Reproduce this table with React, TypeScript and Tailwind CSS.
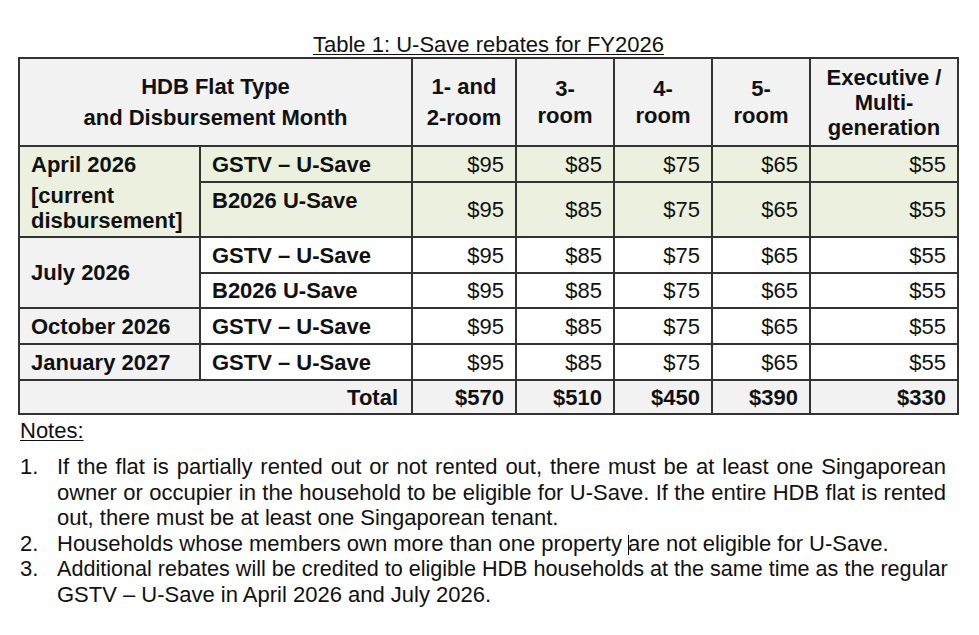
export default function App() {
  const num = "text-right pr-[11px] border-r-2 border-b-2 border-[#333]";
  const cell = "border-r-2 border-b-2 border-[#333]";
  const vals = ["$95", "$85", "$75", "$65", "$55"];
  const Nums = ({ bg }: { bg: string }) => (
    <>
      {vals.map((v) => (
        <td key={v} className={`${num} ${bg}`}>{v}</td>
      ))}
    </>
  );
  const just = "block [text-align-last:justify] text-justify";
  return (
    <div className="w-[979px] h-[635px] bg-white text-[#111] font-['Liberation_Sans',Arial,sans-serif] overflow-hidden">
      <div className="pt-[33px] pl-[18px]">
        <div className="w-[941px] h-[24px] text-center text-[22px] leading-[24px]">
          <span className="underline underline-offset-[2px] decoration-1">Table 1: U-Save rebates for FY2026</span>
        </div>
        <table className="border-separate border-spacing-0 table-fixed w-[941px] border-l-2 border-t-2 border-[#333] text-[22px] leading-[25px]">
          <colgroup>
            <col className="w-[181px]" />
            <col className="w-[212px]" />
            <col className="w-[104px]" />
            <col className="w-[98px]" />
            <col className="w-[98px]" />
            <col className="w-[98px]" />
            <col className="w-[148px]" />
          </colgroup>
          <tbody>
            <tr className="h-[88px] bg-[#f2f2f2] font-bold text-center">
              <td colSpan={2} className={`${cell} leading-[31px]`}>
                HDB Flat Type
                <br />
                and Disbursement Month
              </td>
              <td className={`${cell} leading-[31px]`}>
                1- and
                <br />
                2-room
              </td>
              <td className={`${cell} leading-[27px]`}>
                3-
                <br />
                room
              </td>
              <td className={`${cell} leading-[27px]`}>
                4-
                <br />
                room
              </td>
              <td className={`${cell} leading-[27px]`}>
                5-
                <br />
                room
              </td>
              <td className={`${cell} leading-[25px]`}>
                Executive /
                <br />
                Multi-
                <br />
                generation
              </td>
            </tr>
            <tr className="h-[36px]">
              <td rowSpan={2} className={`${cell} bg-[#ebf1de] font-bold align-top pl-[11px]`}>
                <div className="leading-[36px]">April 2026</div>
                <div className="leading-[25px]">
                  [current
                  <br />
                  disbursement]
                </div>
              </td>
              <td className={`${cell} bg-[#ebf1de] font-bold pl-[11px]`}>GSTV – U-Save</td>
              <Nums bg="bg-[#ebf1de]" />
            </tr>
            <tr className="h-[55px]">
              <td className={`${cell} bg-[#ebf1de] font-bold pl-[11px] align-top leading-[36px]`}>B2026 U-Save</td>
              <Nums bg="bg-[#ebf1de]" />
            </tr>
            <tr className="h-[36px]">
              <td rowSpan={2} className={`${cell} bg-[#f2f2f2] font-bold pl-[11px]`}>July 2026</td>
              <td className={`${cell} bg-white font-bold pl-[11px]`}>GSTV – U-Save</td>
              <Nums bg="bg-white" />
            </tr>
            <tr className="h-[35px]">
              <td className={`${cell} bg-white font-bold pl-[11px]`}>B2026 U-Save</td>
              <Nums bg="bg-white" />
            </tr>
            <tr className="h-[36px]">
              <td className={`${cell} bg-[#f2f2f2] font-bold pl-[11px]`}>October 2026</td>
              <td className={`${cell} bg-white font-bold pl-[11px]`}>GSTV – U-Save</td>
              <Nums bg="bg-white" />
            </tr>
            <tr className="h-[36px]">
              <td className={`${cell} bg-[#f2f2f2] font-bold pl-[11px]`}>January 2027</td>
              <td className={`${cell} bg-white font-bold pl-[11px]`}>GSTV – U-Save</td>
              <Nums bg="bg-white" />
            </tr>
            <tr className="h-[34px] bg-[#f2f2f2] font-bold">
              <td colSpan={2} className={`${cell} text-right pr-[13px]`}>Total</td>
              <td className={num}>$570</td>
              <td className={num}>$510</td>
              <td className={num}>$450</td>
              <td className={num}>$390</td>
              <td className={num}>$330</td>
            </tr>
          </tbody>
        </table>
        <div className="mt-[3px] pl-[2px] text-[22px] leading-[25px]">
          <span className="underline underline-offset-[2px] decoration-1">Notes:</span>
        </div>
        <ol className="mt-[11px] text-[22px] leading-[25.5px] whitespace-nowrap">
          <li className="flex">
            <span className="w-[39px] pl-[2px] shrink-0">1.</span>
            <div className="w-[889px]">
              <span className={just}>
                If the flat is partially rented out or not rented out, there must be at least one Singaporean
              </span>
              <span className={just}>
                owner or occupier in the household to be eligible for U-Save. If the entire HDB flat is rented
              </span>
              <span className="block">out, there must be at least one Singaporean tenant.</span>
            </div>
          </li>
          <li className="flex">
            <span className="w-[39px] pl-[2px] shrink-0">2.</span>
            <div className="w-[889px]">
              Households whose members own more than one property{" "}
              <span className="inline-block w-px h-[20px] bg-black align-[-4px] -mr-px"></span>are not eligible for U-Save.
            </div>
          </li>
          <li className="flex">
            <span className="w-[39px] pl-[2px] shrink-0">3.</span>
            <div className="w-[889px]">
              <span className={`${just} text-[21.6px]`}>
                Additional rebates will be credited to eligible HDB households at the same time as the regular
              </span>
              <span className="block">GSTV – U-Save in April 2026 and July 2026.</span>
            </div>
          </li>
        </ol>
      </div>
    </div>
  );
}
